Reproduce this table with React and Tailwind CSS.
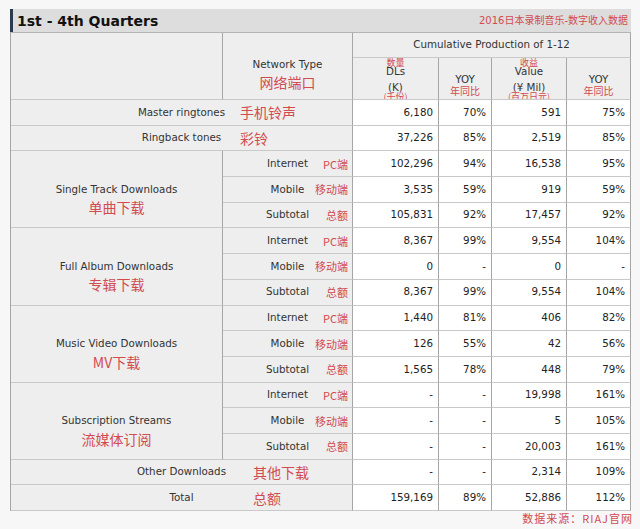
const border = "border-r border-b border-r-[#a6a6a6] border-b-[#c9c9c9]";
const gray = "bg-[#eeeeee]";
const red = "text-[#d24b4f]";
const cjk = "font-['Noto_Sans_CJK_SC',sans-serif]";

function HeadTwo({ top, l1, l2, bottom }) {
  return (
    <td className={`${border} ${gray} p-0`}>
      <div className="relative flex h-[41px] flex-col items-center justify-center overflow-hidden leading-[16px]">
        <span>{l1}</span>
        <span>{l2}</span>
        <span className={`absolute left-0 right-0 top-0 text-center text-[9px] leading-[9px] ${red} ${cjk}`}>{top}</span>
        <span className={`absolute left-0 right-0 top-[34px] text-center text-[9px] leading-[9px] ${red} ${cjk}`}>{bottom}</span>
      </div>
    </td>
  );
}

function HeadYoy() {
  return (
    <td className={`${border} ${gray} p-0`}>
      <div className="relative flex h-[41px] flex-col items-center justify-center">
        <span className="leading-[14px]">YOY</span>
        <span className={`absolute left-0 right-0 top-[28px] text-center text-[10px] leading-[10px] ${red} ${cjk}`}>年同比</span>
      </div>
    </td>
  );
}

function Nums({ v }) {
  return v.map((x, i) => (
    <td key={i} className={`${border} bg-white pr-[5px] text-right text-[#222]`}>{x}</td>
  ));
}

function WideRow({ en, zh, zhLeft, v }) {
  return (
    <tr className="h-[25.7px]">
      <td colSpan={2} className={`${border} ${gray} relative text-center`}>
        {en}
        <span className={`absolute top-1/2 -translate-y-1/2 text-[14px] leading-[16px] ${zhLeft} ${red} ${cjk}`}>{zh}</span>
      </td>
      <Nums v={v} />
    </tr>
  );
}

const subLabels = [
  ["Internet", "PC端"],
  ["Mobile", "移动端"],
  ["Subtotal", "总额"],
];

function Group({ en, zh, rows }) {
  return rows.map((v, i) => (
    <tr key={i} className="h-[25.7px]">
      {i === 0 && (
        <td rowSpan={3} className={`${border} ${gray} relative text-center`}>
          {en}
          <span className={`absolute left-0 right-0 top-[calc(50%+10px)] text-center text-[14px] leading-[16px] ${red} ${cjk}`}>{zh}</span>
        </td>
      )}
      <td className={`${border} ${gray} relative text-center`}>
        {subLabels[i][0]}
        <span className={`absolute right-[4px] top-1/2 -translate-y-1/2 text-[11px] leading-[12px] ${red} ${cjk}`}>{subLabels[i][1]}</span>
      </td>
      <Nums v={v} />
    </tr>
  ));
}

export default function App() {
  return (
    <div className="h-[529px] w-[640px] overflow-hidden bg-[#f7f7f7] pl-[10px] pt-[9px] font-['DejaVu_Sans','Noto_Sans_CJK_SC',sans-serif] text-[#333]">
      <div className="w-[621px]">
        <div className="flex h-[23px] items-center justify-between border-l-[3px] border-l-[#2b3a4f] bg-[#dddddd] pl-[4px] pr-[3px]">
          <span className="text-[14px] font-bold leading-none text-[#111]">1st - 4th Quarters</span>
          <span className={`text-[10px] leading-none ${red}`}>2016日本录制音乐-数字收入数据</span>
        </div>
        <table className="w-[621px] table-fixed border-separate border-spacing-0 border-l border-t border-l-[#a6a6a6] border-t-[#b5b5b5] text-[10.3px]">
          <colgroup>
            <col className="w-[212px]" />
            <col className="w-[130px]" />
            <col className="w-[86px]" />
            <col className="w-[53px]" />
            <col className="w-[75px]" />
            <col className="w-[64px]" />
          </colgroup>
          <tbody>
            <tr className="h-[25px]">
              <td rowSpan={2} className={`${border} ${gray}`}></td>
              <td rowSpan={2} className={`${border} ${gray} relative text-center`}>
                <span className="relative top-[-1px]">Network Type</span>
                <span className={`absolute left-0 right-0 top-[41px] text-center text-[14px] leading-[16px] ${red} ${cjk}`}>网络端口</span>
              </td>
              <td colSpan={4} className={`${border} ${gray} text-center`}>Cumulative Production of 1-12</td>
            </tr>
            <tr className="h-[42px]">
              <HeadTwo top="数量" l1="DLs" l2="(K)" bottom="(千份)" />
              <HeadYoy />
              <HeadTwo top="收益" l1="Value" l2="(¥ Mil)" bottom="(百万日元)" />
              <HeadYoy />
            </tr>
            <WideRow en="Master ringtones" zh="手机铃声" zhLeft="left-[229px]" v={["6,180", "70%", "591", "75%"]} />
            <WideRow en="Ringback tones" zh="彩铃" zhLeft="left-[229px]" v={["37,226", "85%", "2,519", "85%"]} />
            <Group
              en="Single Track Downloads"
              zh="单曲下载"
              rows={[
                ["102,296", "94%", "16,538", "95%"],
                ["3,535", "59%", "919", "59%"],
                ["105,831", "92%", "17,457", "92%"],
              ]}
            />
            <Group
              en="Full Album Downloads"
              zh="专辑下载"
              rows={[
                ["8,367", "99%", "9,554", "104%"],
                ["0", "-", "0", "-"],
                ["8,367", "99%", "9,554", "104%"],
              ]}
            />
            <Group
              en="Music Video Downloads"
              zh="MV下载"
              rows={[
                ["1,440", "81%", "406", "82%"],
                ["126", "55%", "42", "56%"],
                ["1,565", "78%", "448", "79%"],
              ]}
            />
            <Group
              en="Subscription Streams"
              zh="流媒体订阅"
              rows={[
                ["-", "-", "19,998", "161%"],
                ["-", "-", "5", "105%"],
                ["-", "-", "20,003", "161%"],
              ]}
            />
            <WideRow en="Other Downloads" zh="其他下载" zhLeft="left-[242px]" v={["-", "-", "2,314", "109%"]} />
            <WideRow en="Total" zh="总额" zhLeft="left-[242px]" v={["159,169", "89%", "52,886", "112%"]} />
          </tbody>
        </table>
        <div className="mr-[-2px] flex justify-end">
          <span className={`text-[11px] leading-[15px] tracking-[1px] ${red} ${cjk}`}>数据来源：RIAJ官网</span>
        </div>
      </div>
    </div>
  );
}
